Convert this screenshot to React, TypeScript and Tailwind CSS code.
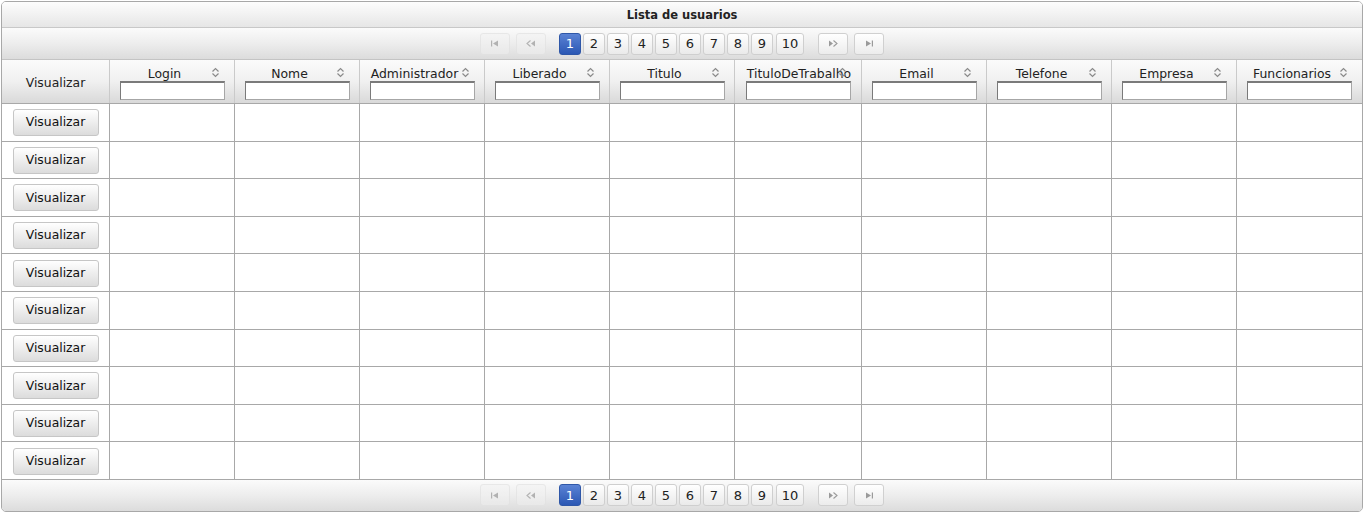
import React from "react";

const columns = [
  "Login",
  "Nome",
  "Administrador",
  "Liberado",
  "Titulo",
  "TituloDeTrabalho",
  "Email",
  "Telefone",
  "Empresa",
  "Funcionarios",
];

const grid =
  "grid grid-cols-[108px_125px_125px_125px_125px_125px_127px_125px_125px_125px_125px]";

function SortIcon() {
  return (
    <svg width="9" height="11" viewBox="0 0 9 11" className="absolute right-[14px] top-[7px]">
      <path d="M1.5 4.5 L4.5 1.5 L7.5 4.5" fill="none" stroke="#8a8a8a" strokeWidth="1.2" />
      <path d="M1.5 6.5 L4.5 9.5 L7.5 6.5" fill="none" stroke="#8a8a8a" strokeWidth="1.2" />
    </svg>
  );
}

function NavIcon({ kind }: { kind: "first" | "prev" | "next" | "last" }) {
  const c = "#9a9a9a";
  return (
    <svg width="10" height="7" viewBox="0 0 10 7">
      {kind === "first" && (
        <>
          <rect x="1" y="0.5" width="1.2" height="6" fill={c} />
          <path d="M8 0.5 L3 3.5 L8 6.5 Z" fill={c} />
        </>
      )}
      {kind === "prev" && (
        <>
          <path d="M4.5 0.5 L1 3.5 L4.5 6.5" fill="none" stroke={c} strokeWidth="1.1" />
          <path d="M9 0.5 L5 3.5 L9 6.5 Z" fill={c} />
        </>
      )}
      {kind === "next" && (
        <>
          <path d="M1 0.5 L5 3.5 L1 6.5 Z" fill={c} />
          <path d="M5.5 0.5 L9 3.5 L5.5 6.5" fill="none" stroke={c} strokeWidth="1.1" />
        </>
      )}
      {kind === "last" && (
        <>
          <path d="M2 0.5 L7 3.5 L2 6.5 Z" fill={c} />
          <rect x="7.8" y="0.5" width="1.2" height="6" fill={c} />
        </>
      )}
    </svg>
  );
}

function NavButton({ kind, disabled }: { kind: "first" | "prev" | "next" | "last"; disabled?: boolean }) {
  return (
    <span
      className={`flex h-[22px] w-[30px] items-center justify-center rounded-[3px] border ${
        disabled
          ? "border-[#e2e2e2] bg-gradient-to-b from-[#f4f4f4] to-[#ececec] opacity-70"
          : "border-[#d0d0d0] bg-gradient-to-b from-[#ffffff] to-[#ececec]"
      }`}
    >
      <NavIcon kind={kind} />
    </span>
  );
}

function Paginator({ top }: { top?: boolean }) {
  const pages = [1, 2, 3, 4, 5, 6, 7, 8, 9, 10];
  return (
    <div
      className={`flex h-[32px] items-center justify-center bg-gradient-to-b from-[#fbfbfb] via-[#ededed] to-[#dcdcdc] ${
        top ? "border-b border-[#c4c4c4]" : "border-t border-[#a8a8a8]"
      }`}
    >
      <div className="flex items-center">
        <NavButton kind="first" disabled />
        <span className="ml-[6px]">
          <NavButton kind="prev" disabled />
        </span>
        <div className="ml-[13px] flex gap-[2px]">
          {pages.map((p) => (
            <span
              key={p}
              className={`flex h-[22px] items-center justify-center rounded-[3px] border text-[13px] ${
                p === 10 ? "w-[28px] ml-[1px]" : "w-[22px]"
              } ${
                p === 1
                  ? "border-[#2f57a8] bg-gradient-to-b from-[#5a82d4] to-[#2c58b4] text-white"
                  : "border-[#cfcfcf] bg-gradient-to-b from-[#ffffff] to-[#eaeaea] text-[#222]"
              }`}
            >
              {p}
            </span>
          ))}
        </div>
        <span className="ml-[14px]">
          <NavButton kind="next" />
        </span>
        <span className="ml-[6px]">
          <NavButton kind="last" />
        </span>
      </div>
    </div>
  );
}

export default function App() {
  return (
    <div className="bg-white pl-px pt-px" style={{ fontFamily: '"DejaVu Sans", Verdana, sans-serif' }}>
      <div className="w-[1362px] overflow-hidden rounded-[5px] border border-[#a8a8a8] text-[#222]">
        <div className="flex h-[26px] items-center justify-center border-b border-[#c8c8c8] bg-gradient-to-b from-[#fdfdfd] to-[#e6e6e6] pt-[3px] text-[11.5px] font-bold">
          Lista de usuarios
        </div>
        <Paginator top />

        <div className={`${grid} h-[43px] bg-gradient-to-b from-[#fbfbfb] via-[#f0f0f0] to-[#d9d9d9] text-[12.4px]`}>
          <div className="flex items-center justify-center border-r border-[#cacaca] pt-[3px]">Visualizar</div>
          {columns.map((c, i) => (
            <div
              key={c}
              className={`relative flex flex-col items-center pt-[6px] ${
                i < columns.length - 1 ? "border-r border-[#cacaca]" : ""
              }`}
            >
              {/* long titles don't fit beside the sort icon, so they center on the whole cell */}
              <div
                className={`w-full whitespace-nowrap text-center leading-[15px] ${
                  c.length > 13 ? "pl-[2px]" : "pr-[15px]"
                }`}
              >
                {c}
              </div>
              <SortIcon />
              <div className="h-[19px] w-[105px] border border-[#a6a6a6] border-l-[#7a7a7a] border-t-2 border-t-[#7a7a7a] bg-white" />
            </div>
          ))}
        </div>

        {Array.from({ length: 10 }).map((_, r) => (
          <div key={r} className={`${grid} h-[37.6px] border-t border-[#a8a8a8] bg-white`}>
            <div className="flex items-center justify-center border-r border-[#a8a8a8] pt-px">
              <span className="flex h-[27px] w-[86px] items-center justify-center rounded-[3px] border border-[#c6c6c6] bg-gradient-to-b from-[#ffffff] to-[#dcdcdc] text-[12.4px] text-[#111]">
                Visualizar
              </span>
            </div>
            {columns.map((c, i) => (
              <div key={c} className={i < columns.length - 1 ? "border-r border-[#a8a8a8]" : ""} />
            ))}
          </div>
        ))}

        <Paginator />
      </div>
    </div>
  );
}
